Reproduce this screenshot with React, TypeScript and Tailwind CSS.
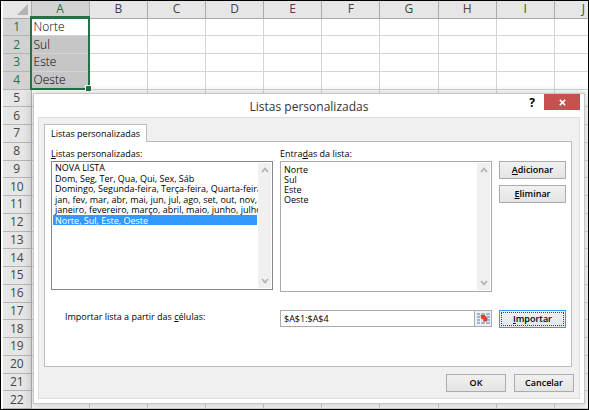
import { useState } from "react";
import type { ReactNode } from "react";
import clsx from "clsx";

const columns = ["A", "B", "C", "D", "E", "F", "G", "H", "I", "J"];
const cells = ["Norte", "Sul", "Este", "Oeste"];
const customLists = [
  "NOVA LISTA",
  "Dom, Seg, Ter, Qua, Qui, Sex, Sáb",
  "Domingo, Segunda-feira, Terça-feira, Quarta-feira, Quinta-feira",
  "jan, fev, mar, abr, mai, jun, jul, ago, set, out, nov, dez",
  "janeiro, fevereiro, março, abril, maio, junho, julho, agosto",
  "Norte, Sul, Este, Oeste",
];

function Sheet() {
  return (
    <table className="h-full w-[610px] table-fixed border-collapse bg-white text-[#444]">
      <colgroup>
        <col className="w-[28px]" />
        {columns.map((c) => (
          <col key={c} className="w-[58px]" />
        ))}
      </colgroup>
      <thead>
        <tr className="h-[17px]">
          <th className="border-r border-b border-[#ababab] bg-[#e6e6e6] p-0">
            <svg viewBox="0 0 12 12" className="mr-[3px] ml-auto h-[11px] w-[11px]">
              <path d="M12 0V12H0z" fill="#b4b4b4" />
            </svg>
          </th>
          {columns.map((c) => (
            <th
              key={c}
              className={clsx(
                "border-r border-b p-0 text-[12px] leading-[16px] font-normal",
                c === "A"
                  ? "border-[#217346] border-r-[#ababab] bg-[#d2d2d2] text-[#217346]"
                  : "border-[#ababab] bg-[#e6e6e6]"
              )}
            >
              {c}
            </th>
          ))}
        </tr>
      </thead>
      <tbody>
        {Array.from({ length: 22 }, (_, row) => (
          <tr key={row}>
            <th
              className={clsx(
                "border-r border-b border-[#b5b5b5] p-0 text-[12px] leading-[16px] font-normal",
                row < 4 ? "bg-[#d2d2d2] text-[#217346]" : "bg-[#e6e6e6]"
              )}
            >
              {row + 1}
            </th>
            {columns.map((c) => (
              <td
                key={c}
                className={clsx(
                  "border-r border-b border-[#d4d4d4] p-0 pl-[2px] text-[12px] leading-[16px] font-light whitespace-nowrap text-black",
                  c === "A" && row > 0 && row < 4 && "bg-[#c6c6c6]"
                )}
              >
                {c === "A" && cells[row]}
              </td>
            ))}
          </tr>
        ))}
      </tbody>
    </table>
  );
}

function ScrollBar() {
  return (
    <div className="my-px mr-px flex w-[13px] shrink-0 flex-col items-center justify-between bg-[#f0f0f0] py-[4px]">
      <svg viewBox="0 0 8 6" className="h-[6px] w-[8px]" fill="none" stroke="#b4b4b4" strokeWidth="1.8">
        <path d="M1 5L4 1.6L7 5" />
      </svg>
      <svg viewBox="0 0 8 6" className="h-[6px] w-[8px]" fill="none" stroke="#b4b4b4" strokeWidth="1.8">
        <path d="M1 1L4 4.4L7 1" />
      </svg>
    </div>
  );
}

function DialogButton({ children, className }: { children: ReactNode; className?: string }) {
  return (
    <button
      type="button"
      className={clsx(
        "h-[18px] border bg-linear-to-b from-[#f1f1f1] to-[#e4e4e4] text-[9px] leading-[14px] font-semibold",
        className || "border-[#acacac]"
      )}
    >
      {children}
    </button>
  );
}

function RangeIcon() {
  return (
    <svg viewBox="0 0 13 11" className="h-[11px] w-[13px]">
      <path d="M0 0H13V11H0z" fill="#dfe8f6" />
      <path d="M0 1H13M0 4H4M9 4H13M0 7H4M10 7H13M0 10H13" stroke="#5b82c4" strokeWidth="1" />
      <path d="M3.5 0V11M8.5 0V3M8.5 9V11" stroke="#f8fbff" strokeWidth="1" />
      <path d="M3.6 2L8 2L8.6 3.6L10.6 5.4L9.8 8.4L6.2 8.6L6.3 6.6L4 5.6z" fill="#d8432c" />
    </svg>
  );
}

export default function App() {
  const [selected, setSelected] = useState(customLists[5]);
  const [entries, setEntries] = useState(cells.join("\n"));
  const [range, setRange] = useState("$A$1:$A$4");

  return (
    <div className="relative h-screen overflow-hidden border border-black bg-white pl-[2px] font-['Open_Sans',sans-serif]">
      <Sheet />

      {/* selection frame with the fill handle */}
      <div className="absolute top-[15px] left-[29px] h-[74px] w-[60px] border-2 border-[#217346]">
        <span className="absolute -right-[3px] -bottom-[3px] h-[5px] w-[5px] bg-[#217346] ring-1 ring-white"></span>
      </div>

      <div
        role="dialog"
        aria-labelledby="dialog-title"
        className="absolute top-[92px] right-[3px] left-[32px] border border-[#c9c5c4] bg-white px-[4px] pb-[4px] text-[9px] leading-[14px] text-black shadow-[0_1px_8px_2px_rgba(0,0,0,0.18)]"
      >
        <div className="grid h-[23px] grid-cols-[1fr_auto_1fr]">
          <h1 id="dialog-title" className="col-start-2 text-[12px] leading-[25px] text-[#333]">
            Listas personalizadas
          </h1>
          <div className="flex items-start justify-end">
            <button type="button" className="w-[24px] text-[12px] leading-[17px] font-bold text-black">
              ?
            </button>
            <button
              type="button"
              aria-label="Fechar"
              className="flex h-[16px] w-[36px] items-center justify-center bg-[#c75050]"
            >
              <svg viewBox="0 0 8 8" className="h-[7px] w-[7px]" stroke="#fff" strokeWidth="1.8">
                <path d="M1 1L7 7M7 1L1 7" />
              </svg>
            </button>
          </div>
        </div>

        <div className="border border-[#dcdcdc] bg-[#f0f0f0] px-[5px] pt-[6px] pb-[6px]">
          <div role="tablist" className="flex">
            <button
              type="button"
              role="tab"
              aria-selected="true"
              className="relative -mb-px h-[18px] border border-b-0 border-[#bcbcbc] bg-white px-[6px] font-medium"
            >
              Listas personalizadas
            </button>
          </div>

          <div
            role="tabpanel"
            className="mr-[2px] border border-[#bcbcbc] bg-white pt-[5px] pr-[5px] pb-[38px] pl-[6px]"
          >
            <div className="grid grid-cols-[minmax(0,222fr)_minmax(0,212fr)_67px] gap-x-[7px]">
              <div>
                <label htmlFor="lists" className="block font-medium">
                  <u>L</u>istas personalizadas:
                </label>
                <div className="flex h-[129px] border border-[#828790]">
                  <select
                    id="lists"
                    size={6}
                    value={selected}
                    onChange={(e) => setSelected(e.target.value)}
                    className="min-w-0 flex-1 appearance-none overflow-hidden bg-white px-px py-0 text-[9px] outline-none"
                  >
                    {customLists.map((list, i) => (
                      <option
                        key={list}
                        className={clsx(
                          "flex h-[11px] min-h-0 items-center p-0 pl-[2px] checked:bg-[linear-gradient(#3399ff,#3399ff)] checked:[-webkit-text-fill-color:#fff] even:h-[10px] last:h-[11px]",
                          i > 0 && i < 5 ? "font-medium" : "font-normal"
                        )}
                      >
                        {list}
                      </option>
                    ))}
                  </select>
                  <ScrollBar />
                </div>
              </div>

              <div>
                <label htmlFor="entries" className="block font-medium">
                  Entra<u>d</u>as da lista:
                </label>
                <div className="flex h-[131px] border border-[#ababab]">
                  <textarea
                    id="entries"
                    value={entries}
                    onChange={(e) => setEntries(e.target.value)}
                    className="min-w-0 flex-1 resize-none overflow-hidden bg-white py-[3px] pl-[3px] text-[9px] leading-[10px] outline-none"
                  />
                  <ScrollBar />
                </div>
              </div>

              <div className="flex flex-col gap-[6px] pt-[14px]">
                <DialogButton>
                  <u>A</u>dicionar
                </DialogButton>
                <DialogButton>
                  <u>E</u>liminar
                </DialogButton>
              </div>

              <label htmlFor="range" className="mt-[18px] pl-[14px] font-medium">
                Importar lista a partir das <u>c</u>élulas:
              </label>
              <div className="mt-[18px] flex h-[17px] border border-[#ababab]">
                <input
                  id="range"
                  value={range}
                  onChange={(e) => setRange(e.target.value)}
                  className="min-w-0 flex-1 pl-[3px] text-[9px] font-medium outline-none"
                />
                <button
                  type="button"
                  aria-label="Selecionar intervalo"
                  className="flex w-[17px] items-center justify-center border-l border-[#ababab] bg-[#f0f0f0]"
                >
                  <RangeIcon />
                </button>
              </div>
              <DialogButton className="mt-[18px] border-[#3399ff] outline-1 -outline-offset-3 outline-dotted outline-[#444]">
                <u>I</u>mportar
              </DialogButton>
            </div>
          </div>

          <div className="mt-[7px] flex justify-end gap-[8px]">
            <DialogButton className="w-[60px] border-[#acacac]">OK</DialogButton>
            <DialogButton className="w-[60px] border-[#acacac]">Cancelar</DialogButton>
          </div>
        </div>
      </div>
    </div>
  );
}
